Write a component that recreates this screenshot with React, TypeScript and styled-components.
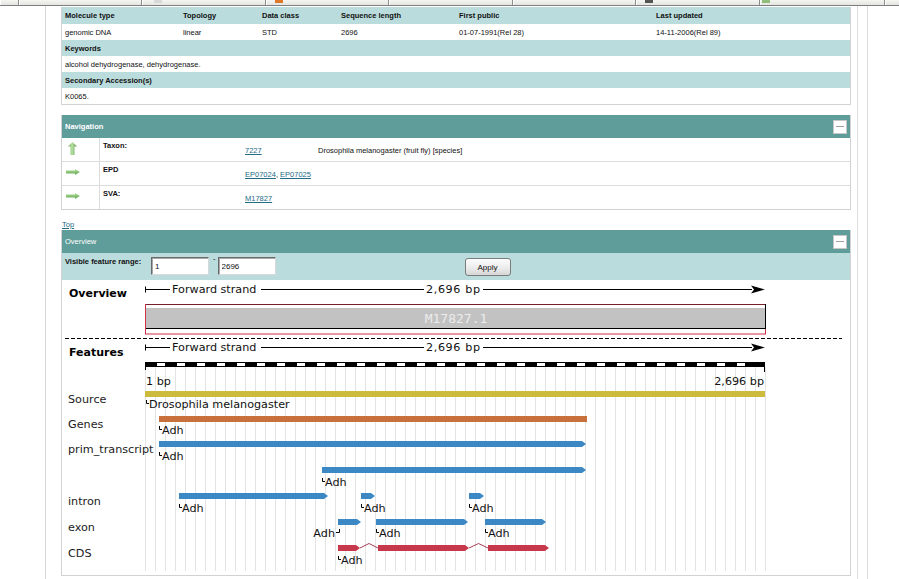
import React from "react";
import styled, { createGlobalStyle } from "styled-components";

const GlobalStyle = createGlobalStyle`
  html, body {
    margin: 0;
    padding: 0;
    background: #ffffff;
  }
  body {
    font-family: "Liberation Sans", Arial, sans-serif;
    font-size: 7.5px;
    color: #111;
    overflow: hidden;
  }
`;

/* ---- browser tab strip at the very top ---- */

const Strip = styled.div`
  display: flex;
  height: 5px;
  border-bottom: 1px solid #7f7f7f;
  background: linear-gradient(#f5f5f3, #e4e4e0);
  overflow: hidden;
`;

const StripCell = styled.div<{ $w: number }>`
  flex: none;
  display: flex;
  width: ${(p) => p.$w}px;
  border-right: 1px solid #8c8c8c;
  box-shadow: inset 1px 0 0 #ffffff;
`;

const StripIcon = styled.span<{ $x: number; $c: string }>`
  width: 8px;
  height: 3px;
  margin-left: ${(p) => p.$x}px;
  background: ${(p) => p.$c};
`;

/* ---- page frame ---- */

const Frame = styled.div`
  display: flex;
  height: 573px;
`;

const Gutter = styled.div`
  flex: none;
  width: 45px;
  border-right: 1px solid #d6d6d6;
`;

const Main = styled.main`
  flex: none;
  width: 790px;
  padding: 1px 6px 0 15px;
  border-right: 1px solid #dcdcdc;
`;

const RightGutter = styled.div`
  flex: none;
  width: 9px;
  border-right: 1px solid #dcdcdc;
`;

/* ---- entry info table ---- */

const InfoBox = styled.div`
  border: 1px solid #d2d2d2;
  border-top: 0;
`;

const InfoRow = styled.div<{ $head?: boolean; $h?: number }>`
  display: grid;
  grid-template-columns: 118px 79px 79px 118px 197px 1fr;
  align-items: center;
  height: ${(p) => p.$h ?? 16}px;
  background: ${(p) => (p.$head ? "#badcdc" : "#ffffff")};
  font-weight: ${(p) => (p.$head ? "bold" : "normal")};
`;

const WideRow = styled.div<{ $head?: boolean }>`
  display: flex;
  align-items: center;
  height: 16px;
  padding-left: 3px;
  background: ${(p) => (p.$head ? "#badcdc" : "#ffffff")};
  font-weight: ${(p) => (p.$head ? "bold" : "normal")};
`;

const Cell = styled.div`
  padding-left: 3px;
  white-space: nowrap;
`;

/* ---- panels ---- */

const Panel = styled.section<{ $top: number }>`
  margin-top: ${(p) => p.$top}px;
  border: 1px solid #d2d2d2;
  border-top: 0;
`;

const PanelHead = styled.div<{ $bold?: boolean }>`
  display: flex;
  align-items: center;
  justify-content: space-between;
  height: 23px;
  padding: 0 3px;
  background: #5f9d9b;
  color: #ffffff;
  font-weight: ${(p) => (p.$bold ? "bold" : "normal")};
`;

const Collapse = styled.span`
  display: flex;
  align-items: center;
  justify-content: center;
  box-sizing: border-box;
  width: 14px;
  height: 14px;
  background: #ffffff;
  border: 1px solid #c6c6c6;

  &::after {
    content: "";
    width: 8px;
    height: 1px;
    background: #a0a0a0;
  }
`;

const NavRow = styled.div<{ $last?: boolean }>`
  display: grid;
  grid-template-columns: 38px 142px 73px 1fr;
  height: 23px;
  border-bottom: ${(p) => (p.$last ? "0" : "1px solid #dcdcdc")};
`;

const IconCell = styled.div`
  display: flex;
  align-items: center;
  padding-bottom: 3px;
  border-right: 1px solid #dcdcdc;
`;

const IconSlot = styled.span`
  display: flex;
  justify-content: center;
  width: 21px;
`;

const NavLabel = styled.div`
  padding: 3px 0 0 3px;
  line-height: 10px;
  font-weight: bold;
`;

const NavValue = styled.div`
  display: flex;
  align-items: center;
  padding: 2px 0 0 3px;
  white-space: nowrap;
`;

const Link = styled.a`
  color: #246b84;
  text-decoration: underline;
`;

const TopLink = styled.a`
  display: block;
  height: 10px;
  padding: 10px 0 0 1px;
  line-height: 10px;
  color: #246b84;
  text-decoration: underline;
`;

const RangeBar = styled.form`
  display: flex;
  align-items: flex-start;
  height: 27px;
  padding: 0 3px;
  background: #badcdc;
`;

const RangeLabel = styled.span`
  width: 86px;
  margin-top: 4px;
  line-height: 10px;
  font-weight: bold;
`;

const RangeInput = styled.input`
  box-sizing: border-box;
  width: 58px;
  height: 18px;
  margin: 4px 0 0 0;
  padding: 0 0 0 3px;
  border: 1px solid;
  border-color: #6a6a6a #d8d8d8 #d8d8d8 #6a6a6a;
  box-shadow: inset 1px 1px 0 #a8a8a8;
  background: #ffffff;
  font-family: "Liberation Sans", Arial, sans-serif;
  font-size: 8px;
  color: #111;
`;

const RangeDash = styled.span`
  margin: 2px 2px 0 4px;
  line-height: 8px;
`;

const ApplyButton = styled.button`
  box-sizing: border-box;
  width: 46px;
  height: 18px;
  margin: 5px 0 0 189px;
  padding: 0;
  border: 1px solid #7c7c7c;
  border-radius: 3px;
  background: linear-gradient(#fdfdfd, #ececec 55%, #d6d6d6);
  font-family: "Liberation Sans", Arial, sans-serif;
  font-size: 8px;
  color: #111;
`;

const Canvas = styled.div`
  background: #ffffff;

  svg {
    display: block;
  }
`;

/* ---- icons ---- */

const UpArrow = () => (
  <svg width="9" height="13" viewBox="0 0 9 13">
    <defs>
      <linearGradient id="upg" x1="0" x2="1" y1="0" y2="0">
        <stop offset="0" stopColor="#5c9f4a" />
        <stop offset="0.45" stopColor="#b9e3a5" />
        <stop offset="1" stopColor="#4f9440" />
      </linearGradient>
    </defs>
    <polygon points="4.5,0 9,4.5 6.5,4.5 6.5,13 2.5,13 2.5,4.5 0,4.5" fill="url(#upg)" />
  </svg>
);

const RightArrow = () => (
  <svg width="14" height="6" viewBox="0 0 14 6">
    <defs>
      <linearGradient id="rg" x1="0" x2="0" y1="0" y2="1">
        <stop offset="0" stopColor="#b7e2a2" />
        <stop offset="1" stopColor="#5ea44b" />
      </linearGradient>
    </defs>
    <polygon points="0,1.5 9,1.5 9,0 14,3 9,6 9,4.5 0,4.5" fill="url(#rg)" />
  </svg>
);

/* ---- the feature drawing ---- */

const LABEL_FONT = "'DejaVu Sans', Verdana, sans-serif";
const gridXs = Array.from({ length: 63 }, (_, i) => 145 + i * 10);
const scaleGaps = Array.from({ length: 30 }, (_, i) => 145 + i * 20 + 12);

type Bar = { x1: number; x2: number; y: number; color: string; arrow?: boolean };
type Tag = { x: number; base: number; text: string; right?: boolean };

const YELLOW = "#cdbb3e";
const ORANGE = "#c8713c";
const BLUE = "#3b88c5";
const RED = "#c8384c";

const bars: Bar[] = [
  { x1: 145, x2: 765, y: 391, color: YELLOW },
  { x1: 159, x2: 587, y: 416, color: ORANGE },
  { x1: 159, x2: 586, y: 441, color: BLUE, arrow: true },
  { x1: 322, x2: 586, y: 467, color: BLUE, arrow: true },
  { x1: 179, x2: 328, y: 493, color: BLUE, arrow: true },
  { x1: 361, x2: 375, y: 493, color: BLUE, arrow: true },
  { x1: 469, x2: 484, y: 493, color: BLUE, arrow: true },
  { x1: 338, x2: 361, y: 519, color: BLUE, arrow: true },
  { x1: 376, x2: 468, y: 519, color: BLUE, arrow: true },
  { x1: 485, x2: 546, y: 519, color: BLUE, arrow: true },
  { x1: 338, x2: 360, y: 545, color: RED, arrow: true },
  { x1: 378, x2: 469, y: 545, color: RED, arrow: true },
  { x1: 488, x2: 549, y: 545, color: RED, arrow: true },
];

const tags: Tag[] = [
  { x: 146, base: 408, text: "Drosophila melanogaster" },
  { x: 159, base: 434, text: "Adh" },
  { x: 159, base: 460, text: "Adh" },
  { x: 322, base: 486, text: "Adh" },
  { x: 179, base: 512, text: "Adh" },
  { x: 361, base: 512, text: "Adh" },
  { x: 469, base: 512, text: "Adh" },
  { x: 339, base: 537, text: "Adh", right: true },
  { x: 376, base: 537, text: "Adh" },
  { x: 485, base: 537, text: "Adh" },
  { x: 338, base: 564, text: "Adh" },
];

const tracks: { name: string; base: number }[] = [
  { name: "Source", base: 403 },
  { name: "Genes", base: 428 },
  { name: "prim_transcript", base: 453 },
  { name: "intron", base: 505 },
  { name: "exon", base: 531 },
  { name: "CDS", base: 557 },
];

const barPoints = ({ x1, x2, y, arrow }: Bar) =>
  arrow
    ? `${x1},${y} ${x2 - 4},${y} ${x2},${y + 3} ${x2 - 4},${y + 6} ${x1},${y + 6}`
    : `${x1},${y} ${x2},${y} ${x2},${y + 6} ${x1},${y + 6}`;

const Strand = ({ y }: { y: number }) => (
  <g>
    <line x1={145.5} x2={145.5} y1={y - 3} y2={y + 3} stroke="#000" />
    <line x1={145} x2={170} y1={y} y2={y} stroke="#000" />
    <text x={172} y={y + 3.5} fontFamily={LABEL_FONT} fontSize={11.2} fill="#111">
      Forward strand
    </text>
    <line x1={261} x2={424} y1={y} y2={y} stroke="#000" />
    <text
      x={426}
      y={y + 3.5}
      fontFamily={LABEL_FONT}
      fontSize={11.2}
      fill="#111"
      textLength={54}
      lengthAdjust="spacing"
    >
      2,696 bp
    </text>
    <line x1={483} x2={752} y1={y} y2={y} stroke="#000" />
    <polygon points={`${751},${y - 4} ${765},${y} ${751},${y + 4} ${754},${y}`} fill="#000" />
  </g>
);

const FeatureView = () => (
  <svg width="788" height="295" viewBox="62 280 788 295">
    {/* overview */}
    <text x={69} y={297} fontFamily={LABEL_FONT} fontWeight="bold" fontSize={11} fill="#000">
      Overview
    </text>
    <Strand y={289.5} />
    <rect x={145.5} y={304.5} width={620} height={29.5} fill="none" stroke="#cc3346" />
    <line x1={146} x2={765} y1={304.5} y2={304.5} stroke="#3a1418" strokeOpacity={0.6} />
    <rect x={146} y={308} width={619} height={20} fill="#c2c2c2" />
    <line x1={146} x2={765} y1={328.5} y2={328.5} stroke="#000" />
    <line x1={765.5} x2={765.5} y1={304} y2={329} stroke="#000" />
    <text
      x={456}
      y={322.5}
      textAnchor="middle"
      fontFamily="'DejaVu Sans Mono', monospace"
      fontSize={13}
      fill="#ececec"
    >
      M17827.1
    </text>
    <line
      x1={65}
      x2={842}
      y1={338.5}
      y2={338.5}
      stroke="#000"
      strokeDasharray="4 2"
    />

    {/* features */}
    <text x={69} y={356} fontFamily={LABEL_FONT} fontWeight="bold" fontSize={11} fill="#000">
      Features
    </text>
    <Strand y={347.5} />

    {gridXs.map((x) => (
      <line key={x} x1={x + 0.5} x2={x + 0.5} y1={367} y2={571} stroke="#e3e3e3" />
    ))}

    <rect x={145} y={362} width={620} height={5} fill="#000" />
    {scaleGaps.map((x) => (
      <rect key={x} x={x} y={363} width={8} height={3} fill="#fff" />
    ))}
    <line x1={145.5} x2={145.5} y1={362} y2={370} stroke="#000" />
    <line x1={764.5} x2={764.5} y1={362} y2={372} stroke="#000" />
    <text x={146} y={385} fontFamily={LABEL_FONT} fontSize={11.2} fill="#111">
      1 bp
    </text>
    <text
      x={764}
      y={385}
      textAnchor="end"
      fontFamily={LABEL_FONT}
      fontSize={11.2}
      fill="#111"
    >
      2,696 bp
    </text>

    {tracks.map((t) => (
      <text key={t.name} x={68} y={t.base} fontFamily={LABEL_FONT} fontSize={11.2} fill="#1c1c1c">
        {t.name}
      </text>
    ))}

    {bars.map((b, i) => (
      <polygon key={i} points={barPoints(b)} fill={b.color} />
    ))}

    <polyline points="360,548 369,543.5 378,548" fill="none" stroke="#9a2c48" strokeWidth={0.9} />
    <polyline points="469,548 478.5,543.5 488,548" fill="none" stroke="#9a2c48" strokeWidth={0.9} />

    {tags.map((t, i) => (
      <g key={i}>
        <path
          d={
            t.right
              ? `M${t.x + 0.5} ${t.base - 8} V${t.base - 4.5} H${t.x - 3}`
              : `M${t.x + 0.5} ${t.base - 8} V${t.base - 4.5} H${t.x + 3}`
          }
          fill="none"
          stroke="#000"
        />
        <text
          x={t.right ? t.x - 4 : t.x + 3}
          y={t.base}
          textAnchor={t.right ? "end" : "start"}
          fontFamily={LABEL_FONT}
          fontSize={11.2}
          fill="#111"
        >
          {t.text}
        </text>
      </g>
    ))}
  </svg>
);

/* ---- page ---- */

const stripCells: { w: number; icon?: { x: number; c: string } }[] = [
  { w: 18 },
  { w: 122 },
  { w: 123, icon: { x: 12, c: "#d8d8d8" } },
  { w: 122, icon: { x: 9, c: "#e0782c" } },
  { w: 123 },
  { w: 122 },
  { w: 123, icon: { x: 9, c: "#555555" } },
  { w: 124, icon: { x: 2, c: "#8fbf7a" } },
  { w: 40 },
];

export default function App() {
  return (
    <>
      <GlobalStyle />
      <Strip>
        {stripCells.map((c, i) => (
          <StripCell key={i} $w={c.w}>
            {c.icon && <StripIcon $x={c.icon.x} $c={c.icon.c} />}
          </StripCell>
        ))}
      </Strip>
      <Frame>
        <Gutter />
        <Main>
          <InfoBox>
            <InfoRow $head $h={17}>
              <Cell>Molecule type</Cell>
              <Cell>Topology</Cell>
              <Cell>Data class</Cell>
              <Cell>Sequence length</Cell>
              <Cell>First public</Cell>
              <Cell>Last updated</Cell>
            </InfoRow>
            <InfoRow>
              <Cell>genomic DNA</Cell>
              <Cell>linear</Cell>
              <Cell>STD</Cell>
              <Cell>2696</Cell>
              <Cell>01-07-1991(Rel 28)</Cell>
              <Cell>14-11-2006(Rel 89)</Cell>
            </InfoRow>
            <WideRow $head>Keywords</WideRow>
            <WideRow>alcohol dehydrogenase, dehydrogenase.</WideRow>
            <WideRow $head>Secondary Accession(s)</WideRow>
            <WideRow>K0065.</WideRow>
          </InfoBox>

          <Panel $top={10}>
            <PanelHead $bold>
              Navigation
              <Collapse />
            </PanelHead>
            <NavRow>
              <IconCell>
                <IconSlot>
                  <UpArrow />
                </IconSlot>
              </IconCell>
              <NavLabel>Taxon:</NavLabel>
              <NavValue>
                <Link href="#">7227</Link>
              </NavValue>
              <NavValue>Drosophila melanogaster (fruit fly) [species]</NavValue>
            </NavRow>
            <NavRow>
              <IconCell>
                <IconSlot>
                  <RightArrow />
                </IconSlot>
              </IconCell>
              <NavLabel>EPD</NavLabel>
              <NavValue>
                <Link href="#">EP07024</Link>,&nbsp;<Link href="#">EP07025</Link>
              </NavValue>
              <NavValue />
            </NavRow>
            <NavRow $last>
              <IconCell>
                <IconSlot>
                  <RightArrow />
                </IconSlot>
              </IconCell>
              <NavLabel>SVA:</NavLabel>
              <NavValue>
                <Link href="#">M17827</Link>
              </NavValue>
              <NavValue />
            </NavRow>
          </Panel>

          <TopLink href="#">Top</TopLink>

          <Panel $top={0}>
            <PanelHead>
              Overview
              <Collapse />
            </PanelHead>
            <RangeBar onSubmit={(e) => e.preventDefault()}>
              <RangeLabel>Visible feature range:</RangeLabel>
              <RangeInput defaultValue="1" />
              <RangeDash>-</RangeDash>
              <RangeInput defaultValue="2696" />
              <ApplyButton type="submit">Apply</ApplyButton>
            </RangeBar>
            <Canvas>
              <FeatureView />
            </Canvas>
          </Panel>
        </Main>
        <RightGutter />
      </Frame>
    </>
  );
}
